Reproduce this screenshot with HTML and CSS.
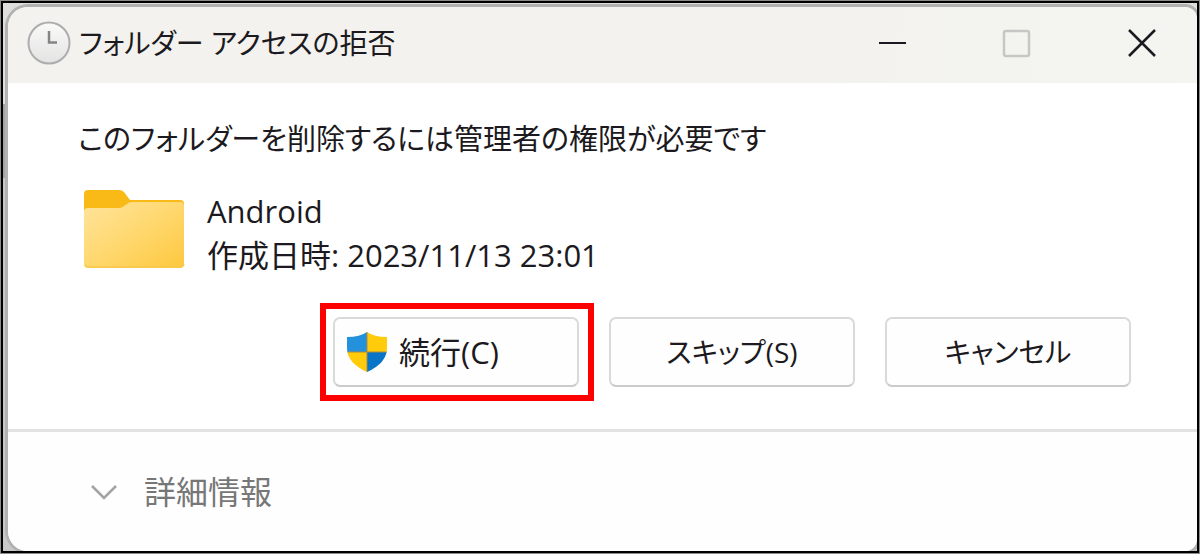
FILE: index.html
```html
<!DOCTYPE html>
<html lang="ja">
<head>
<meta charset="utf-8">
<meta name="viewport" content="width=device-width, initial-scale=1">
<title>フォルダー アクセスの拒否</title>
<link rel="stylesheet" href="styles.css">
</head>
<body>
<div class="desktop">
  <main class="dialog">
    <header class="titlebar">
      <svg class="clock" viewBox="0 0 44 44" aria-hidden="true">
        <defs><linearGradient id="face" x1="0" y1="0" x2="0" y2="1"><stop offset="0" stop-color="#fafaf9"/><stop offset="1" stop-color="#e3e3e3"/></linearGradient></defs>
        <circle cx="22" cy="22" r="20.5" fill="url(#face)" stroke="#adadad" stroke-width="2"/>
        <path d="M22 10v11.500h8" fill="none" stroke="#858585" stroke-width="2.500"/>
      </svg>
      <h1 class="title">フォルダー アクセスの拒否</h1>
      <div class="controls">
        <button class="control" type="button" aria-label="最小化"><svg viewBox="0 0 30 30"><path d="M2 15h27" stroke="#1c1a20" stroke-width="2"/></svg></button>
        <button class="control" type="button" aria-label="最大化" disabled><svg viewBox="0 0 30 30"><rect x="2" y="3" width="25" height="25" rx="2" fill="none" stroke="#c6c6c4" stroke-width="2.500"/></svg></button>
        <button class="control" type="button" aria-label="閉じる"><svg viewBox="0 0 30 30"><path d="M2 2l26 26M28 2L2 28" stroke="#1c1a20" stroke-width="2.500"/></svg></button>
      </div>
    </header>
    <section class="content">
      <p class="message">このフォルダーを削除するには管理者の権限が必要です</p>
      <div class="item">
        <svg class="folder" viewBox="0 0 102 80" aria-hidden="true">
          <defs><linearGradient id="front" x1="0" y1="0" x2="1" y2="1"><stop offset="0" stop-color="#ffe49d"/><stop offset=".55" stop-color="#ffd669"/><stop offset="1" stop-color="#fdc83f"/></linearGradient></defs>
          <path d="M5 1h31q3 0 5 2l6 8h50q4 0 4 4v20H1V5q0-4 4-4z" fill="#f9ba17"/>
          <path d="M1 23q0-4 4-4h31q3 0 5-2l3-2q2-2 5-2h48q4 0 4 4v58q0 4-4 4H5q-4 0-4-4z" fill="url(#front)"/>
          <path d="M2 76q1 2 4 2h90q4 0 5-3" fill="none" stroke="#f8c84b" stroke-width="1.500"/>
        </svg>
        <div class="details">
          <p>Android</p>
          <p>作成日時: 2023/11/13 23:01</p>
        </div>
      </div>
      <div class="actions">
        <div class="highlight">
          <button class="action action-primary" type="button">
            <svg class="shield" viewBox="0 0 40 40" aria-hidden="true">
              <defs><clipPath id="shape"><path d="M20 0q7 5 20 5v11q0 15-20 24Q0 31 0 16V5q13 0 20-5z"/></clipPath></defs>
              <g clip-path="url(#shape)"><path d="M0 0h20v20H0z" fill="#2391dc"/><path d="M20 0h20v20H20zM0 20h20v20H0z" fill="#ffcb0a"/><path d="M20 20h20v20H20z" fill="#0875c9"/><path d="M20 0v40M0 20h40" stroke="#a68b45"/></g>
            </svg>
            <span>続行(C)</span>
          </button>
        </div>
        <button class="action" type="button">スキップ(S)</button>
        <button class="action" type="button">キャンセル</button>
      </div>
    </section>
    <footer class="footer">
      <button class="more" type="button" aria-expanded="false">
        <svg class="chevron" viewBox="0 0 28 16" aria-hidden="true"><path d="M2 2l12 12L26 2" fill="none" stroke="#a3a3a3" stroke-width="2.500"/></svg>
        <span>詳細情報</span>
      </button>
    </footer>
  </main>
</div>
</body>
</html>
```
FILE: styles.css
```css
* { box-sizing: border-box; }

body {
  margin: 0;
  min-height: 100vh;
  display: flex;
  padding: 1px;
  background: #8b8d8a;
  color: #1c1a20;
  font-family: "Open Sans", "Noto Sans CJK JP", sans-serif;
  font-size: 28px;
  line-height: 44px;
  font-feature-settings: "palt";
}

h1, p { margin: 0; }

button {
  padding: 0;
  border: 0;
  background: none;
  color: inherit;
  font: inherit;
  font-feature-settings: inherit;
}

svg { display: block; }

.desktop {
  flex: 1;
  display: flex;
  overflow: hidden;
  padding: 4px 0 0 5px;
  border: 2px solid #000;
  background: linear-gradient(#dededc 0 101px, #a5a5a5 101px 175px, #c8c8c8 175px);
}

.dialog {
  flex: 1;
  display: flex;
  flex-direction: column;
  overflow: hidden;
  border-radius: 20px 12px 12px 20px;
  background: #fff;
  box-shadow: 0 0 0 3px #b2b2b2;
}

.titlebar {
  display: flex;
  align-items: center;
  gap: 8px;
  min-height: 76px;
  padding: 0 13px 4px 19px;
  background: linear-gradient(100deg, #f3f2ee 70%, #f4f5f0);
}

.clock { width: 44px; height: 44px; }

.title {
  flex: 1;
  font-size: 28px;
  font-weight: 400;
}

.controls { display: flex; gap: 41px; }

.control {
  display: grid;
  place-items: center;
  width: 84px;
  height: 60px;
}

.control svg { width: 30px; height: 30px; }

.content {
  padding: 34px 66px 28px 70px;
}

.message { font-size: 29px; }

.item {
  display: flex;
  align-items: flex-start;
  gap: 22px;
  margin-top: 28px;
  padding-left: 5px;
}

.folder { width: 102px; height: 80px; }

.details { font-size: 31px; }

.actions {
  display: flex;
  justify-content: flex-end;
  align-items: center;
  gap: 30px;
  margin-top: 26px;
}

.highlight {
  margin-right: -15px;
  padding: 8px 9px 8px 7px;
  border: 6px solid #f00;
}

.action {
  width: 246px;
  height: 70px;
  border: 2px solid #d9d9d7;
  border-bottom-color: #cbcbc9;
  border-radius: 7px;
  background: #fefefe;
}

.action-primary {
  display: flex;
  align-items: center;
  gap: 12px;
  padding-left: 12px;
  font-size: 31px;
}

.shield { width: 40px; height: 40px; }

.footer {
  flex: 1;
  display: flex;
  align-items: center;
  padding: 0 82px;
  border-top: 3px solid #e3e3e3;
  background: #fefefe;
}

.more {
  display: flex;
  align-items: center;
  gap: 26px;
  color: #777;
  font-size: 32px;
}

.chevron { width: 28px; height: 16px; }
```
